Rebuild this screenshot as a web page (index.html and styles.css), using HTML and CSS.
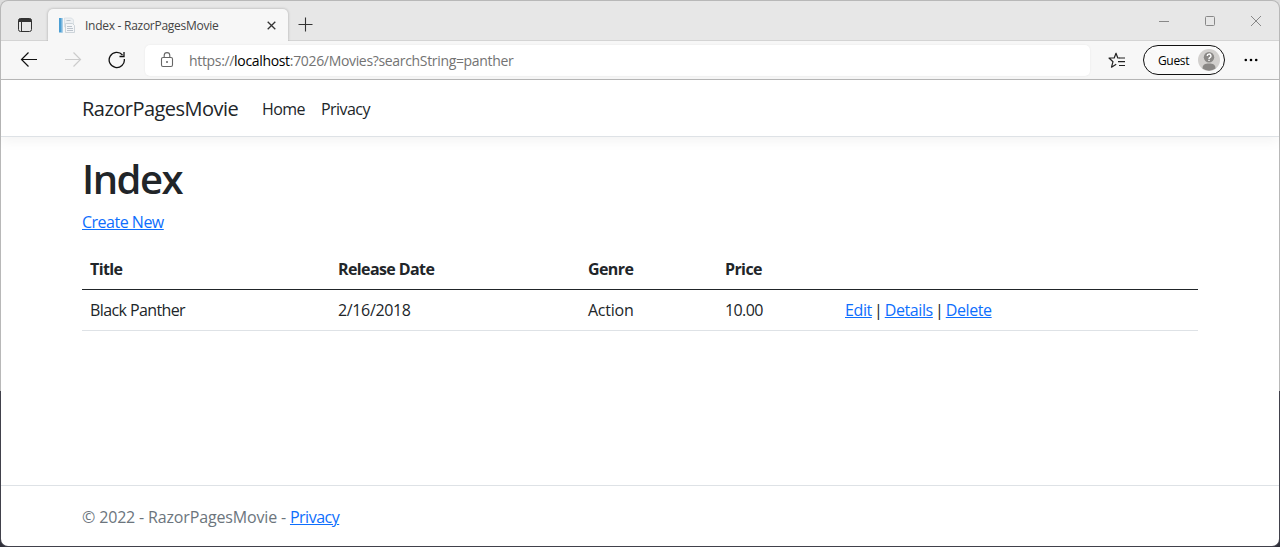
FILE: index.html
```html
<!DOCTYPE html>
<html lang="en">
<head>
<meta charset="utf-8">
<title>Index - RazorPagesMovie</title>
<link rel="stylesheet" href="styles.css">
</head>
<body>
<div class="desktop">
<div class="window">
  <div class="titlebar">
    <svg class="tab-menu" width="16" height="16" viewBox="0 0 16 16"><rect x="1.500" y="1.500" width="13" height="13" rx="2" fill="none" stroke="#333"/><path d="M1.500 5V3.500a2 2 0 0 1 2-2h9a2 2 0 0 1 2 2V5z" fill="#333"/><path d="M4.500 5v9.500" stroke="#333"/></svg>
    <div class="tab">
      <svg width="16" height="17" viewBox="0 0 16 17"><path d="M5.500 1h7l2 2v7h-9z" fill="#edf0f3" stroke="#d3dae0" stroke-width=".7"/><path d="M0 1h3.500v14.500H0z" fill="#4c9fd4"/><path d="M2.500 1H4v14.500H2.500z" fill="#a9cfe8"/><path d="M6.500 6.500h7l2 2v7h-9z" fill="#f4f6f8" stroke="#c3cbd2" stroke-width=".8"/><path d="M7.500 3.500h4M8 9.500h5M8 11.500h6M8 13.500h6" stroke="#b4bdc6" stroke-width=".9"/></svg>
      <span class="tab-title">Index - RazorPagesMovie</span>
      <svg class="tab-close" width="9" height="9" viewBox="0 0 9 9"><path d="M.7.700l7.600 7.600M8.300.700L.7 8.300" stroke="#333" stroke-width="1.300"/></svg>
    </div>
    <svg class="new-tab" width="15" height="15" viewBox="0 0 15 15"><path d="M7.500.500v14M.5 7.500h14" stroke="#333" stroke-width="1.100"/></svg>
    <div class="controls">
      <svg width="12" height="12" viewBox="0 0 12 12"><path d="M1 6.500h10" stroke="#888"/></svg>
      <svg width="12" height="12" viewBox="0 0 12 12"><rect x="1.500" y="1.500" width="9" height="9" rx="1" fill="none" stroke="#888"/></svg>
      <svg width="12" height="12" viewBox="0 0 12 12"><path d="M1 1l10 10M11 1L1 11" stroke="#888"/></svg>
    </div>
  </div>
  <div class="toolbar">
    <svg class="back" width="18" height="16" viewBox="0 0 18 16"><path d="M17 7.500H1.500M8.500.500l-7 7 7 7" fill="none" stroke="#111" stroke-width="1.200"/></svg>
    <svg class="forward" width="18" height="16" viewBox="0 0 18 16"><path d="M1 7.500h15.500M9.500.500l7 7-7 7" fill="none" stroke="#ccc" stroke-width="1.200"/></svg>
    <svg class="reload" width="18" height="18" viewBox="0 0 18 18"><path d="M16.300 8A7.600 7.600 0 1 1 14.500 4M16 1v4.500h-4.500" fill="none" stroke="#111" stroke-width="1.300"/></svg>
    <div class="address">
      <svg width="14" height="16" viewBox="0 0 14 16"><rect x="1.500" y="5.500" width="11" height="9" rx="1.500" fill="none" stroke="#666" stroke-width="1.100"/><path d="M4.200 5.500V3.400a2.800 2.800 0 0 1 5.600 0v2.100" fill="none" stroke="#666" stroke-width="1.100"/><circle cx="7" cy="10" r="1" fill="#666"/></svg>
      <span class="url">https://<b>localhost</b>:7026/Movies?searchString=panther</span>
    </div>
    <svg class="favorites" width="18" height="17" viewBox="0 0 18 17"><path d="M11.500 6H9.800L8 1.200 6.200 6H1l4 3.700-1.500 5.500 4.700-2.900" fill="none" stroke="#222" stroke-width="1.200" stroke-linejoin="round"/><path d="M11 6h6M10 9.700h7M11 13.500h6" stroke="#222" stroke-width="1.200"/></svg>
    <div class="profile"><span>Guest</span>
      <svg width="22" height="22" viewBox="0 0 22 22"><circle cx="11" cy="11" r="11" fill="#d2d0ce"/><path d="M4.500 19.500C4.500 15.500 7 14.500 11 14.500s6.500 1 6.500 5a11 11 0 0 1-13 0z" fill="#8a8886"/><circle cx="11" cy="8.300" r="5.200" fill="#8a8886"/><path d="M9.200 7a1.900 1.900 0 1 1 2.700 1.700q-.9.400-.9 1.200M11 10.800v1.300" fill="none" stroke="#fff" stroke-width="1.400"/></svg>
    </div>
    <svg class="more" width="14" height="4" viewBox="0 0 14 4"><circle cx="1.800" cy="2" r="1.300"/><circle cx="7" cy="2" r="1.300"/><circle cx="12.200" cy="2" r="1.300"/></svg>
  </div>
  <div class="page">
    <header class="navbar">
      <a class="brand">RazorPagesMovie</a><a class="nav-home">Home</a><a class="nav-privacy">Privacy</a>
    </header>
    <main class="content">
      <h1>Index</h1>
      <p class="create"><a class="link">Create New</a></p>
      <table>
        <thead><tr><th class="c-title">Title</th><th class="c-date">Release Date</th><th class="c-genre">Genre</th><th class="c-price">Price</th><th></th></tr></thead>
        <tbody><tr><td class="v-title">Black Panther</td><td class="v-date">2/16/2018</td><td class="v-genre">Action</td><td class="v-price">10.00</td><td class="v-actions"><a class="link">Edit</a> | <a class="link">Details</a> | <a class="link">Delete</a></td></tr></tbody>
      </table>
    </main>
    <footer class="footer">© 2022 - RazorPagesMovie - <a class="link">Privacy</a></footer>
  </div>
</div>
</div>
</body>
</html>
```
FILE: styles.css
```css
* { box-sizing: border-box; }
body { margin: 0; font-family: "Open Sans", "Noto Sans", sans-serif; color: #212529; }
svg { display: block; flex: none; }
.desktop { height: 547px; background: linear-gradient(#dcdcdc 0 391px, #30303a 391px); }
.window {
  height: 547px; display: flex; flex-direction: column;
  border: 1px solid transparent; border-radius: 8px;
  background: linear-gradient(#b8b8b8 0 391px, #41414b 391px) border-box;
}
.titlebar { height: 40px; flex: none; display: flex; background: #e7e7e7; border-bottom: 1px solid #d4d4d4; border-radius: 7px 7px 0 0; }
.tab-menu { margin: 16px 0 0 16px; }
.tab { width: 240px; height: 32px; margin: 8px 0 0 15px; padding: 0 12px 0 11px; display: flex; align-items: center; background: #f7f7f7; border-radius: 5px 5px 0 0; box-shadow: 0 0 3px rgba(0,0,0,.28); clip-path: inset(-4px -4px 0); }
.tab-title { margin-left: 10px; font-size: 12px; letter-spacing: -.27px; color: #444; white-space: nowrap; }
.tab-close { margin-left: auto; }
.new-tab { margin: 16px 0 0 10px; }
.controls { margin: 14px 17px 0 auto; display: flex; gap: 34px; }
.toolbar { height: 39px; flex: none; display: flex; align-items: center; background: #f7f7f7; border-bottom: 1px solid #b8b8b8; }
.back { margin-left: 19px; }
.forward { margin-left: 26px; }
.reload { margin-left: 26px; }
.address { width: 945px; height: 31px; margin-left: 19px; padding-left: 15px; display: flex; align-items: center; background: #fff; border-radius: 5px; box-shadow: 0 0 2px rgba(0,0,0,.08); }
.url { margin-left: 15px; font-size: 14px; letter-spacing: -.33px; color: #737373; }
.url b { font-weight: 400; color: #000; }
.favorites { margin-left: 18px; }
.profile { width: 82px; height: 30px; margin-left: 17px; padding: 0 4px 0 14px; display: flex; align-items: center; justify-content: space-between; border: 1px solid #111; border-radius: 15px; background: #fafafa; font-size: 12px; letter-spacing: -.35px; color: #000; }
.more { margin-left: 19px; }
.page { flex: 1; display: flex; flex-direction: column; background: #fff; border-radius: 0 0 7px 7px; font-size: 16px; line-height: 24px; }
.navbar { height: 57px; padding: 1px 81px 0; display: flex; align-items: center; border-bottom: 1px solid #dee2e6; box-shadow: 0 4px 12px rgba(0,0,0,.05); }
.brand { width: 180px; font-size: 20px; letter-spacing: -.53px; }
.nav-home { width: 59px; letter-spacing: -.55px; }
.nav-privacy { letter-spacing: -.55px; }
.content { flex: 1; padding: 18px 81px 0; }
h1 { margin: 0 0 7px; font-size: 40px; line-height: 48px; font-weight: 600; letter-spacing: -1.5px; }
.create { margin: 0 0 15px; letter-spacing: -.5px; }
.link { color: #0d6efd; text-decoration: underline; }
table { width: 1116px; table-layout: fixed; border-collapse: separate; border-spacing: 0; }
th { padding: 8px; height: 41px; text-align: left; font-weight: 700; letter-spacing: -.6px; border-bottom: 1px solid #212529; }
td { padding: 8px; height: 41px; border-bottom: 1px solid #dee2e6; white-space: nowrap; }
.c-title { width: 248px; }
.c-date { width: 250px; }
.c-genre { width: 137px; }
.c-price { width: 120px; }
.v-title { letter-spacing: -.6px; }
.v-date { letter-spacing: -.35px; }
.v-genre { letter-spacing: -.25px; }
.v-price { letter-spacing: -.6px; }
.v-actions { letter-spacing: -.4px; word-spacing: -1.500px; }
.footer { height: 61px; padding: 19px 81px 0; border-top: 1px solid #dee2e6; color: #6c757d; letter-spacing: -.16px; }
.footer .link { letter-spacing: -.5px; }
```
